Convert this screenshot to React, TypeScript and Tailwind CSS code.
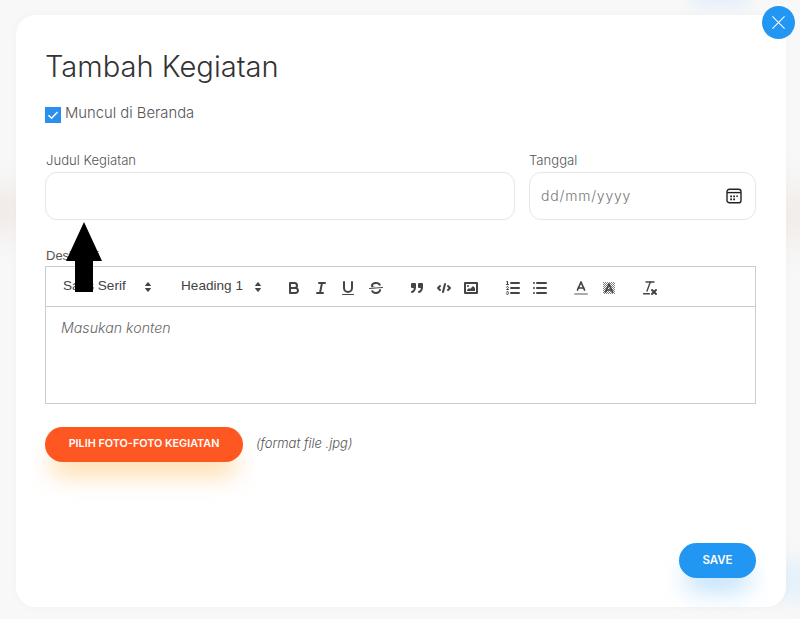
import React from "react";

const stroke = { fill: "none", stroke: "#444", strokeWidth: 2, strokeLinecap: "round" as const, strokeLinejoin: "round" as const };
const thin = { ...stroke, strokeWidth: 1 };

function Ic({ children }: { children: React.ReactNode }) {
  return (
    <span className="flex h-[24px] w-[27.4px] items-center justify-center pt-[2px]">
      <svg viewBox="0 0 18 18" className="h-[18px] w-[18px]">{children}</svg>
    </span>
  );
}

function Picker({ label, width }: { label: string; width: string }) {
  return (
    <div className={`flex items-center justify-between pl-2 pr-[6px] text-[13.6px] text-[#444] ${width}`}>
      <span>{label}</span>
      <svg viewBox="0 0 18 18" className="mt-[2px] h-[18px] w-[18px]">
        <polygon points="6.5 10.5 9 13.5 11.5 10.5" fill="#444" stroke="#444" strokeLinejoin="round" />
        <polygon points="6.5 7.5 9 4.5 11.5 7.5" fill="#444" stroke="#444" strokeLinejoin="round" />
      </svg>
    </div>
  );
}

export default function App() {
  return (
    <div className="relative h-[619px] w-[800px] overflow-hidden bg-[#f8f8f8] pl-[16px] pt-[15px] font-['Inter',sans-serif]">
      <div className="absolute left-[-40px] top-[185px] h-[50px] w-[70px] rounded-full bg-[#f1eae6] blur-[14px]" />
      <div className="absolute right-[-40px] top-[185px] h-[60px] w-[70px] rounded-full bg-[#f2ece9] blur-[14px]" />
      <div className="absolute left-[690px] top-[-14px] h-[20px] w-[60px] rounded-full bg-[#e2eefa] blur-[8px]" />
      <div className="absolute right-[-20px] top-[560px] h-[40px] w-[50px] rounded-full bg-[#e4f0fa] blur-[10px]" />

      <div className="relative flex h-[592px] w-[770px] flex-col rounded-[20px] bg-white pl-[29px] pr-[30px] pt-[34px] shadow-[0_0_10px_rgba(0,0,0,0.03)]">
        <h1 className="text-[29.1px] font-light leading-[36px] text-[#333]">Tambah Kegiatan</h1>

        <div className="mt-[18px] flex h-[20px] items-center">
          <span className="mt-[3px] flex h-4 w-4 items-center justify-center bg-[#2b8ff0]">
            <svg viewBox="0 0 16 16" className="h-4 w-4">
              <path d="M3.5 8.2 6.6 11.2 12.5 5" fill="none" stroke="#fff" strokeWidth={1.6} />
            </svg>
          </span>
          <span className="ml-[4px] text-[14.8px] font-light text-[#555]">Muncul di Beranda</span>
        </div>

        <div className="mt-[29px] flex gap-[14px]">
          <div className="w-[470px]">
            <div className="pl-px text-[13.1px] font-light leading-[17px] text-[#555]">Judul Kegiatan</div>
            <div className="mt-[3px] h-[48px] rounded-[12px] border border-[#e6e6e6]" />
          </div>
          <div className="w-[227px]">
            <div className="text-[13.1px] font-light leading-[17px] text-[#555]">Tanggal</div>
            <div className="mt-[3px] flex h-[48px] items-center justify-between rounded-[12px] border border-[#e6e6e6] pl-[11px] pr-[13px]">
              <span className="pb-[2px] text-[14px] font-light tracking-[0.8px] text-[#777]">dd/mm/yyyy</span>
              <svg viewBox="0 0 16 16" className="h-4 w-4">
                <rect x="1" y="1.2" width="14" height="13.6" rx="2.4" fill="none" stroke="#222" strokeWidth="1.4" />
                <path d="M1 4.6H15" stroke="#222" strokeWidth="1.4" />
                <path d="M4.2 7.4h1.8v1.8H4.2zM7.2 7.4h1.8v1.8H7.2zM10.2 7.4h1.8v1.3h-1.8zM4.2 10.4h1.8v1.8H4.2zM7.2 10.4h1.8v1.8H7.2z" fill="#222" />
              </svg>
            </div>
          </div>
        </div>

        <div className="mt-[26px] pl-px font-['Liberation_Sans',sans-serif] text-[13px] leading-[20px] text-[#555]">Deskripsi</div>
        <div className="font-['Liberation_Sans',sans-serif]">
          <div className="flex h-[41px] items-center border border-[#ccc] pl-[9px]">
            <Picker label="Sans Serif" width="w-[108px]" />
            <span className="w-[10px]" />
            <Picker label="Heading 1" width="w-[100px]" />
            <span className="w-[7px]" />
            <Ic>
              <path {...stroke} d="M5,4H9.5A2.5,2.5,0,0,1,12,6.5v0A2.5,2.5,0,0,1,9.5,9H5A0,0,0,0,1,5,9V4A0,0,0,0,1,5,4Z" />
              <path {...stroke} d="M5,9h5.5A2.5,2.5,0,0,1,13,11.5v0A2.5,2.5,0,0,1,10.5,14H5a0,0,0,0,1,0,0V9A0,0,0,0,1,5,9Z" />
            </Ic>
            <Ic>
              <line {...stroke} x1="7" x2="13" y1="4" y2="4" />
              <line {...stroke} x1="5" x2="11" y1="14" y2="14" />
              <line {...stroke} x1="8" x2="10" y1="14" y2="4" />
            </Ic>
            <Ic>
              <path {...stroke} d="M5,3V9a4.012,4.012,0,0,0,4,4H9a4.012,4.012,0,0,0,4-4V3" />
              <rect fill="#444" height="1" rx=".5" ry=".5" width="12" x="3" y="15" />
            </Ic>
            <Ic>
              <line {...thin} x1="15.5" x2="2.5" y1="8.5" y2="9.5" />
              <path fill="#444" d="M9.007,8C6.542,7.791,6,7.519,6,6.5,6,5.792,7.283,5,9,5c1.571,0,2.765.679,2.95,1.656l1.965-.37C13.5,4.062,11.472,3,9,3,6.57,3,4,4.266,4,6.5a3.078,3.078,0,0,0,.456,1.7Z" />
              <path fill="#444" d="M11.97,10.5c.03.16.03.33.03.5,0,.89-1.32,2-3,2-1.65,0-2.89-.79-2.96-1.7l-1.98.2C4.2,13.4,6.34,15,9,15c2.62,0,5-1.7,5-4a4.2,4.2,0,0,0-.1-.9Z" />
            </Ic>
            <span className="w-[13.4px]" />
            <Ic>
              <rect {...stroke} fill="#444" height="3" width="3" x="4" y="5" />
              <rect {...stroke} fill="#444" height="3" width="3" x="11" y="5" />
              <path {...stroke} d="M7,8c0,4.031-3,5-3,5" />
              <path {...stroke} d="M14,8c0,4.031-3,5-3,5" />
            </Ic>
            <Ic>
              <polyline {...stroke} points="5 7 3 9 5 11" />
              <polyline {...stroke} points="13 7 15 9 13 11" />
              <line {...stroke} x1="10" x2="8" y1="5" y2="13" />
            </Ic>
            <Ic>
              <rect {...stroke} height="10" width="12" x="3" y="4" />
              <circle fill="#444" cx="6" cy="7" r="1" />
              <polyline fill="#444" points="5 12 5 11 7 9 8 10 11 7 13 9 13 12 5 12" />
            </Ic>
            <span className="w-[14px]" />
            <Ic>
              <line {...stroke} x1="7" x2="15" y1="4" y2="4" />
              <line {...stroke} x1="7" x2="15" y1="9" y2="9" />
              <line {...stroke} x1="7" x2="15" y1="14" y2="14" />
              <line {...thin} x1="2.5" x2="4.5" y1="5.5" y2="5.5" />
              <path fill="#444" d="M3.5,6A0.5,0.5,0,0,1,3,5.5V3.085l-0.276.138A0.5,0.5,0,0,1,2.053,3c-0.124-.247-0.023-0.324.224-0.447l1-.5A0.5,0.5,0,0,1,4,2.5v3A0.5,0.5,0,0,1,3.5,6Z" />
              <path {...thin} d="M4.5,10.5h-2c0-.234,1.85-1.076,1.85-2.234A0.959,0.959,0,0,0,2.5,8.156" />
              <path {...thin} d="M2.5,14.846a0.959,0.959,0,0,0,1.85-.109A0.7,0.7,0,0,0,3.75,14a0.688,0.688,0,0,0,.6-0.736,0.959,0.959,0,0,0-1.85-.109" />
            </Ic>
            <Ic>
              <line {...stroke} x1="6" x2="15" y1="4" y2="4" />
              <line {...stroke} x1="6" x2="15" y1="9" y2="9" />
              <line {...stroke} x1="6" x2="15" y1="14" y2="14" />
              <line {...stroke} x1="3" x2="3" y1="4" y2="4" />
              <line {...stroke} x1="3" x2="3" y1="9" y2="9" />
              <line {...stroke} x1="3" x2="3" y1="14" y2="14" />
            </Ic>
            <span className="w-[13.6px]" />
            <Ic>
              <line stroke="#aaa" strokeWidth={2} strokeLinecap="round" x1="3" x2="15" y1="15" y2="15" />
              <polyline {...stroke} strokeWidth={1.7} points="5.5 11 9 3 12.5 11" />
              <line {...stroke} strokeWidth={1.7} x1="11.63" x2="6.38" y1="9" y2="9" />
            </Ic>
            <Ic>
              <defs>
                <pattern id="dither" width="2" height="2" patternUnits="userSpaceOnUse">
                  <rect width="1" height="1" fill="#444" />
                  <rect x="1" y="1" width="1" height="1" fill="#444" />
                </pattern>
              </defs>
              <rect x="3" y="3" width="12" height="12" fill="url(#dither)" opacity="0.7" />
              <polyline {...stroke} strokeWidth={1.7} points="5.5 13 9 5 12.5 13" />
              <line {...stroke} strokeWidth={1.7} x1="11.63" x2="6.38" y1="11" y2="11" />
            </Ic>
            <span className="w-[13.6px]" />
            <Ic>
              <line {...stroke} strokeWidth={1.4} x1="5" x2="13" y1="3" y2="3" />
              <line {...stroke} strokeWidth={1.4} x1="6" x2="9.35" y1="12" y2="3" />
              <line {...stroke} x1="11" x2="15" y1="11" y2="15" />
              <line {...stroke} x1="15" x2="11" y1="11" y2="15" />
              <rect fill="#444" height="1.4" rx=".5" ry=".5" width="7" x="2" y="14" />
            </Ic>
          </div>
          <div className="h-[97px] border border-t-0 border-[#ccc] pl-[15px] pt-[10px] font-['Inter',sans-serif] text-[14.2px] font-light italic leading-[21px] text-[#666]">
            Masukan konten
          </div>
        </div>

        <div className="mt-[23px] flex items-center">
          <button className="h-[35px] w-[198px] rounded-full bg-[#ff5722] text-[10.8px] font-semibold text-white shadow-[0_18px_25px_-6px_rgba(255,152,0,0.38)]">
            PILIH FOTO-FOTO KEGIATAN
          </button>
          <span className="ml-[13px] pb-[2px] text-[13px] font-light italic text-[#555]">(format file .jpg)</span>
        </div>

        <div className="mt-[81px] flex justify-end">
          <button className="h-[35px] w-[77px] rounded-full bg-[#2196f3] text-[11.5px] font-semibold text-white shadow-[0_18px_25px_-6px_rgba(33,150,243,0.32)]">
            SAVE
          </button>
        </div>

        <button className="absolute right-[-9px] top-[-9px] flex h-[33px] w-[33px] items-center justify-center rounded-full bg-[#2196f3]">
          <svg viewBox="0 0 16 16" className="h-[15px] w-[15px]">
            <path d="M1.5 1.5 14.5 14.5M14.5 1.5 1.5 14.5" stroke="#fff" strokeWidth="1.1" />
          </svg>
        </button>
      </div>

      <svg viewBox="0 0 36 70" className="absolute left-[66px] top-[222px] h-[70px] w-[36px]">
        <path d="M18 0 36 39H27V70H9V39H0Z" fill="#000" />
      </svg>
    </div>
  );
}
